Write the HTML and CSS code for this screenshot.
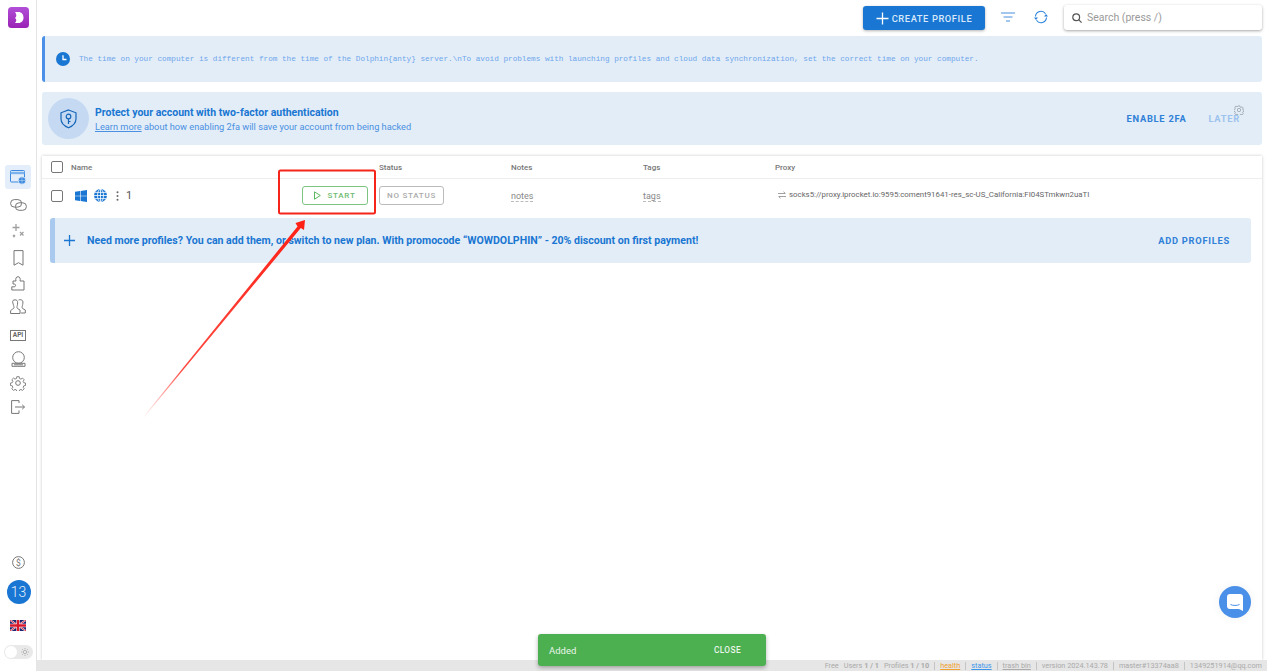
FILE: index.html
```html
<!DOCTYPE html>
<html lang="en">
<head>
<meta charset="utf-8">
<title>Dolphin anty</title>
<link rel="stylesheet" href="styles.css">
</head>
<body>
<div class="app">
  <aside class="sidebar">
    <div class="logo"><svg width="21" height="21" viewBox="0 0 21 21"><defs><linearGradient id="lg" x1="0" y1="0" x2="0" y2="1"><stop offset="0" stop-color="#b14fd8"/><stop offset="1" stop-color="#9a22b4"/></linearGradient></defs><rect width="21" height="21" rx="3.5" fill="url(#lg)"/><path d="M7 5h3.500c3.200 0 5 2.400 5 5.500s-1.800 5.500-5 5.500H7c.8-1.200 1.300-2 1.300-3 0-.9-.6-1.300-1.300-2 .7-.7 1.300-1.200 1.300-2.400C8.300 7.200 7.800 6.200 7 5z" fill="#fff"/></svg></div>
    <nav class="nav">
      <a class="nav-item active"><svg width="16" height="15" viewBox="0 0 16 15" fill="none" stroke="#3b8ae0"><rect x=".5" y=".5" width="14" height="11.500" rx="1"/><path d="M.5 3h14" stroke-width="2.400" stroke="#7db3ec"/><circle cx="12" cy="10.500" r="3.800" fill="#3b8ae0" stroke="#e3eefa" stroke-width=".8"/><path d="M8.500 10.500h7M12 7v7" stroke="#cfe2f7" stroke-width=".5"/></svg></a>
      <a class="nav-item gap4"><svg width="17" height="12" viewBox="0 0 17 12" fill="none" stroke="#777"><rect x=".6" y=".6" width="11" height="7.500" rx="3.700"/><rect x="5.400" y="3.800" width="11" height="7.500" rx="3.700"/></svg></a>
      <a class="nav-item gap2"><svg width="14" height="16" viewBox="0 0 14 16" fill="none" stroke="#a0a0a0" stroke-width="1.300"><path d="M5 1v7M1.500 4.500h7"/><path d="M9 9l3.500 3.500M12.500 9L9 12.500M2 12l2 2M4 12l-2 2"/></svg></a>
      <a class="nav-item gap3"><svg width="11" height="16" viewBox="0 0 11 16" fill="none" stroke="#777"><path d="M1 .6h9v14.600l-4.500-2.500L1 15.200z"/></svg></a>
      <a class="nav-item gap1"><svg width="14" height="15" viewBox="0 0 14 15" fill="none" stroke="#777"><path d="M2 5h3C4.300 3 5 .7 7 .7S9.700 3 9 5h4v9H.8v-3.200h2.600c1.500 0 1.500-2.800 0-2.800H2z"/></svg></a>
      <a class="nav-item"><svg width="16" height="16" viewBox="0 0 16 16" fill="none" stroke="#777"><path d="M3 1.500C4 .6 6 .6 7 1.500c1 1 .6 3.500.3 5-.3 1.400-.7 2.300.2 3L10 11v3.500H.6V12c0-1 1.500-1.500 3-2.500.8-.7.3-1.600 0-3-.3-1.500-1.600-3.800-.6-5z"/><path d="M8.500 1c1.700-.6 3.300-.3 4 .7.900 1.300.2 3.600-.1 5-.3 1.300-.6 2.200.2 2.800l2.700 1.500v3h-4.500"/></svg></a>
      <a class="nav-item gap4"><span class="api">API</span></a>
      <a class="nav-item"><svg width="15" height="16" viewBox="0 0 15 16" fill="none" stroke="#777"><circle cx="7.500" cy="6.500" r="5.800"/><path d="M1 15.300v-3h13v3z"/><path d="M3 13.800h9"/><path d="M5 4.500h.01M8.500 3.500h.01" stroke-width="1.500"/></svg></a>
      <a class="nav-item"><svg width="16" height="16" viewBox="0 0 24 24" fill="none" stroke="#777" stroke-width="1.500"><circle cx="12" cy="12" r="3.500"/><path d="M10 1.500h4l.6 3 2.300 1 2.600-1.700 2.800 2.800-1.700 2.600 1 2.300 3 .6v4l-3 .6-1 2.300 1.700 2.600-2.800 2.800-2.600-1.700-2.300 1-.6 3h-4l-.6-3-2.300-1-2.600 1.700-2.800-2.800 1.700-2.600-1-2.300-3-.6v-4l3-.6 1-2.300L1.700 6.600l2.800-2.800 2.600 1.700 2.300-1z" transform="translate(1.200 1.200) scale(.9)"/></svg></a>
      <a class="nav-item"><svg width="14" height="14" viewBox="0 0 14 14" fill="none" stroke="#777"><path d="M8 3V.6H.6v12.800H8v-3"/><path d="M4 7h9.500M11.200 4.800L13.500 7l-2.300 2.200"/></svg></a>
    </nav>
    <div class="side-bottom">
      <svg width="13" height="13" viewBox="0 0 13 13" fill="none" stroke="#777"><circle cx="6.500" cy="6.500" r="5.900"/><text x="6.500" y="9.500" text-anchor="middle" class="dollar">$</text></svg>
      <div class="avatar">13</div>
      <svg class="flag" width="16" height="11" viewBox="0 0 16 11"><rect width="16" height="11" fill="#1c2470"/><path d="M0 0l16 11M16 0L0 11" stroke="#fff" stroke-width="1.800"/><path d="M0 0l16 11M16 0L0 11" stroke="#d8192c" stroke-width=".9"/><path d="M8 0v11M0 5.500h16" stroke="#fff" stroke-width="3.400"/><path d="M8 0v11M0 5.500h16" stroke="#d8192c" stroke-width="2.400"/></svg>
      <div class="toggle"><span class="knob"></span><svg width="8" height="8" viewBox="0 0 8 8" fill="none" stroke="#aaa" stroke-width=".8"><circle cx="4" cy="4" r="1.700"/><path d="M4 0v1.200M4 6.800V8M0 4h1.200M6.800 4H8M1.200 1.200l.8.800M6 6l.8.800M1.200 6.800L2 6M6 2l.8-.8"/></svg></div>
    </div>
  </aside>

  <div class="main">
    <div class="content">
      <header class="topbar">
        <button class="create"><svg width="13" height="13" viewBox="0 0 13 13" stroke="#fff" stroke-width="1.300"><path d="M6.500 .5v12M.5 6.500h12"/></svg>CREATE PROFILE</button>
        <svg class="tool-filter" width="14" height="10" viewBox="0 0 14 10" stroke="#4a90e2" stroke-width="1.200"><path d="M0 1h14M2.500 5h9M5 9h4"/></svg>
        <svg class="tool-sync" width="14" height="14" viewBox="0 0 14 14" fill="none" stroke="#2a82dc" stroke-width="1.100"><path d="M1.500 6.500A5.500 5.500 0 0 1 11.500 3.700M12.500 7.500A5.500 5.500 0 0 1 2.500 10.300"/><path d="M14 6.500h-4l2-2.600zM0 7.500h4l-2 2.600z" fill="#2a82dc" stroke="none"/></svg>
        <div class="search"><svg width="10" height="10" viewBox="0 0 10 10" fill="none" stroke="#555" stroke-width="1.200"><circle cx="4.200" cy="4.200" r="3.400"/><path d="M6.800 6.800L9.600 9.600"/></svg><span>Search (press /)</span></div>
      </header>

      <div class="alert-time">
        <svg width="14" height="14" viewBox="0 0 14 14"><circle cx="7" cy="7" r="7" fill="#1976d2"/><path d="M7 3.200V7.500h3.500" fill="none" stroke="#fff" stroke-width="1.300"/></svg>
        <span>The time on your computer is different from the time of the Dolphin{anty} server.\nTo avoid problems with launching profiles and cloud data synchronization, set the correct time on your computer.</span>
      </div>

      <div class="alert-2fa">
        <div class="shield"><svg width="17" height="20" viewBox="0 0 17 20" fill="none" stroke="#1565b8" stroke-width="1.200"><path d="M8.500 1l7.500 2.800v6c0 4.200-3.200 7.300-7.500 9-4.300-1.700-7.500-4.800-7.500-9v-6z"/><circle cx="8.500" cy="7.500" r="2.300"/><path d="M8.500 9.800V15M8.500 12.500h2"/></svg></div>
        <div class="tfa-text">
          <div class="tfa-title">Protect your account with two-factor authentication</div>
          <div class="tfa-sub"><u>Learn more</u> about how enabling 2fa will save your account from being hacked</div>
        </div>
        <span class="tfa-enable">ENABLE 2FA</span>
        <span class="tfa-later">LATER<svg class="tfa-gear" width="10" height="10" viewBox="0 0 24 24" fill="none" stroke="#9aa5b1" stroke-width="2"><circle cx="12" cy="12" r="4"/><path d="M10 2h4l.6 3 2.300 1 2.600-1.700 2.800 2.800-1.700 2.600 1 2.300 3 .6v2.800l-3 .6-1 2.300 1.700 2.600-2.800 2.800-2.600-1.700-2.300 1-.6 3h-4l-.6-3-2.300-1-2.600 1.700-2.800-2.800 1.700-2.600-1-2.300-3-.6V10.800l3-.6 1-2.300L1.700 5.300l2.800-2.800 2.600 1.700 2.300-1z"/></svg></span>
      </div>

      <section class="card">
        <div class="tr th">
          <div class="c-name"><span class="check"></span><span class="th-name">Name</span></div>
          <div>Status</div><div>Notes</div><div>Tags</div><div>Proxy</div>
        </div>
        <div class="tr row">
          <div class="c-name">
            <span class="check"></span>
            <svg class="win" width="12" height="12" viewBox="0 0 12 12" fill="#1976d2"><path d="M0 1.700l5-.7v4.700H0zM5.600 .9L12 0v5.700H5.600zM0 6.300h5V11l-5-.7zM5.600 6.300H12V12l-6.400-.9z"/></svg>
            <svg class="globe" width="13" height="13" viewBox="0 0 13 13"><circle cx="6.500" cy="6.500" r="6.500" fill="#1976d2"/><g fill="none" stroke="#fff" stroke-width=".8"><ellipse cx="6.500" cy="6.500" rx="3" ry="6.300"/><path d="M6.500 0v13M0 6.500h13M1 3.400h11M1 9.600h11"/></g></svg>
            <svg class="dots" width="3" height="10" viewBox="0 0 3 10" fill="#666"><circle cx="1.500" cy="1.300" r="1"/><circle cx="1.500" cy="5" r="1"/><circle cx="1.500" cy="8.700" r="1"/></svg>
            <span class="pid">1</span>
            <button class="start"><svg width="7" height="9" viewBox="0 0 7 9" fill="none" stroke="#5cb860"><path d="M.5 .8l5.800 3.700L.5 8.200z"/></svg>START</button>
          </div>
          <div><button class="nostatus">NO STATUS</button></div>
          <div><span class="dash">notes</span></div>
          <div><span class="dash">tags</span></div>
          <div class="proxy"><svg width="8" height="8" viewBox="0 0 8 8" fill="none" stroke="#888" stroke-width=".8"><path d="M0 2.500h7M5.500 .8L7.500 2.500M8 5.500H1M2.500 7.200L.5 5.500"/></svg><span>socks5://proxy.iprocket.io:9595:coment91641-res_sc-US_California:FI04STmkwn2uaTI</span></div>
        </div>
        <div class="banner">
          <svg width="11" height="11" viewBox="0 0 11 11" stroke="#1976d2" stroke-width="1.300"><path d="M5.500 0v11M0 5.500h11"/></svg>
          <span class="banner-text">Need more profiles? You can add them, or switch to new plan. With promocode “WOWDOLPHIN” - 20% discount on first payment!</span>
          <span class="banner-add">ADD PROFILES</span>
        </div>
      </section>
    </div>

    <footer class="footer">
      <span>Free</span><span>Users <b>1 / 1</b></span><span>Profiles <b>1 / 10</b></span><i></i>
      <u class="f-health">health</u><i></i><u class="f-status">status</u><i></i><u>trash bin</u><i></i>
      <span>version 2024.143.78</span><i></i><span>master#13374aa8</span><i></i><span>1349251914@qq.com</span>
    </footer>
  </div>
</div>

<svg class="annotation" width="1267" height="671" viewBox="0 0 1267 671">
  <defs><linearGradient id="ar" gradientUnits="userSpaceOnUse" x1="142" y1="418" x2="305" y2="220"><stop offset="0" stop-color="#ff2a20" stop-opacity="0"/><stop offset=".25" stop-color="#ff2a20" stop-opacity=".85"/><stop offset="1" stop-color="#ff1f14"/></linearGradient></defs>
  <rect x="279" y="170.500" width="96" height="43" rx="1.500" fill="none" stroke="#f5251c" stroke-width="2"/>
  <path d="M142 418.500L297.500 226.500l-2-3.500 9.500-3-1 10-3.200-2L143 418.500z" fill="url(#ar)"/>
</svg>

<div class="toast"><span>Added</span><span class="toast-close">CLOSE</span></div>
<div class="chat"><svg width="16" height="17" viewBox="0 0 16 17"><path d="M3 0h10a3 3 0 0 1 3 3v14l-4-2H3a3 3 0 0 1-3-3V3a3 3 0 0 1 3-3z" fill="#fff"/><path d="M3.500 10.500c2.500 1.300 6.500 1.300 9 0" fill="none" stroke="#4a90e8" stroke-width="1"/></svg></div>
</body>
</html>
```
FILE: styles.css
```css
* { box-sizing: border-box; }
html, body { margin: 0; height: 671px; overflow: hidden; background: #fff; }
body { font-family: Roboto, "Liberation Sans", sans-serif; color: #555; }
u { text-underline-offset: 1px; }
button { font-family: inherit; cursor: pointer; }

.app { display: flex; height: 671px; }

.sidebar { width: 37px; flex: none; border-right: 1px solid #e4e4e4; display: flex; flex-direction: column; align-items: center; }
.logo { width: 21px; height: 21px; margin: 7px 0 0 0; }
.logo svg { display: block; }
.nav { display: flex; flex-direction: column; margin-top: 137px; width: 100%; align-items: center; }
.nav-item { width: 26px; height: 24px; display: flex; align-items: center; justify-content: center; border-radius: 3px; }
.nav-item.active { background: #e3eefa; }
.gap1 { margin-top: 1px; }
.gap2 { margin-top: 2px; }
.gap3 { margin-top: 3px; }
.gap4 { margin-top: 4px; }
.api { border: 1px solid #777; font-size: 6.500px; font-weight: 700; line-height: 9px; padding: 0 1.500px; color: #666; }
.dollar { font: 400 8.500px Roboto, sans-serif; fill: #777; stroke: none; }
.side-bottom { margin-top: auto; display: flex; flex-direction: column; align-items: center; padding-bottom: 12px; }
.avatar { width: 24px; height: 24px; border-radius: 50%; background: #1976d2; color: #e8f2fc; font-size: 14px; font-weight: 300; display: flex; align-items: center; justify-content: center; margin: 11px 0 0 1px; }
.flag { margin-top: 16px; }
.toggle { width: 29px; height: 14px; border-radius: 7px; background: #e9e9e9; margin-top: 14px; display: flex; align-items: center; justify-content: space-between; padding: 0 4px 0 1px; }
.knob { width: 12px; height: 12px; border-radius: 50%; background: #fff; }

.main { flex: 1; min-width: 0; display: flex; flex-direction: column; }
.content { flex: 1; min-height: 0; padding: 0 5px; display: flex; flex-direction: column; }

.topbar { height: 36px; flex: none; display: flex; align-items: flex-start; justify-content: flex-end; }
.create { width: 122px; height: 24px; margin-top: 6px; border: 0; border-radius: 3px; background: #1976d2; color: #d9e9fa; font-size: 9.300px; font-weight: 500; letter-spacing: .6px; display: flex; align-items: center; justify-content: center; gap: 3px; padding: 0; box-shadow: 0 1px 3px rgba(0,0,0,.3); }
.tool-filter { margin: 12px 0 0 16px; }
.tool-sync { margin: 10px 0 0 19px; }
.search { width: 198px; height: 25px; margin: 5px 0 0 16px; border-radius: 3px; background: #fff; box-shadow: 0 1px 3px rgba(0,0,0,.35); display: flex; align-items: center; gap: 5px; padding-left: 8px; font-size: 10.500px; color: #9a9a9a; }

.alert-time { height: 46px; flex: none; background: #e3edf7; border-left: 3px solid #4a90e8; border-radius: 3px; display: flex; align-items: center; gap: 9px; padding-left: 11px; font-family: "Liberation Mono", monospace; font-size: 7.700px; color: #6ea6ec; white-space: nowrap; }

.alert-2fa { height: 53px; flex: none; margin-top: 10px; background: #e3edf7; border-radius: 3px; display: flex; align-items: center; padding-left: 6px; }
.shield { width: 41px; height: 41px; border-radius: 50%; background: #c5daf2; display: flex; align-items: center; justify-content: center; }
.tfa-text { margin-left: 6px; padding-top: 2px; }
.tfa-title { font-size: 10.500px; font-weight: 700; color: #1976d2; line-height: 14px; }
.tfa-sub { font-size: 9.220px; color: #4a90e2; line-height: 14px; }
.tfa-enable { margin-left: auto; font-size: 9.300px; font-weight: 700; letter-spacing: .75px; color: #2f80d8; }
.tfa-later { position: relative; margin: 0 22px 0 22px; font-size: 9.300px; font-weight: 700; letter-spacing: .75px; color: #9cc3ee; }
.tfa-gear { position: absolute; right: -4px; top: -8px; }

.card { flex: 1; min-height: 0; margin-top: 11px; background: #fff; box-shadow: 0 0 3px rgba(0,0,0,.22); }
.tr { display: grid; grid-template-columns: 337px 132px 132px 132px 1fr; padding-left: 0; align-items: center; }
.th { height: 23px; border-bottom: 1px solid #eee; font-size: 8px; font-weight: 500; color: #777; }
.row { height: 33px; font-size: 9px; }
.c-name { display: flex; align-items: center; padding-left: 9px; }
.check { width: 12px; height: 12px; border: 1.300px solid #777; border-radius: 2px; flex: none; }
.th-name { margin-left: 8px; }
.win { margin-left: 12px; }
.globe { margin-left: 7px; }
.dots { margin-left: 9px; }
.pid { margin-left: 7px; font-size: 11px; color: #555; }
.start { margin-left: auto; margin-right: 11px; width: 66px; height: 19px; border: 1px solid #7cc47f; border-radius: 3px; background: #fff; color: #6dbb70; font-size: 8px; font-weight: 500; letter-spacing: .75px; display: flex; align-items: center; justify-content: center; gap: 6px; padding: 0; }
.nostatus { width: 65px; height: 19px; border: 1px solid #bbb; border-radius: 3px; background: #fff; color: #aaa; font-size: 8px; font-weight: 500; letter-spacing: .75px; padding: 0; }
.dash { font-size: 9px; color: #888; border-bottom: 1px dashed #bbb; line-height: 10px; display: inline-block; margin-top: 2px; }
.proxy { display: flex; align-items: center; gap: 3px; padding-left: 3px; font-size: 7.850px; color: #666; white-space: nowrap; margin-top: -2px; }

.banner { height: 45px; margin: 6px 11px 0 8px; background: #e3edf7; border-left: 5px solid #a9c9ee; border-radius: 3px; display: flex; align-items: center; padding-left: 9px; }
.banner-text { margin-left: 12px; font-size: 10.580px; font-weight: 700; color: #1976d2; }
.banner-add { margin-left: auto; margin-right: 21px; font-size: 9.300px; font-weight: 700; letter-spacing: .75px; color: #2f80d8; }

.footer { height: 11px; flex: none; background: #e6e6e6; display: flex; align-items: center; justify-content: flex-end; gap: 5px; padding-right: 5px; font-size: 7.300px; color: #aaa; line-height: 11px; }
.footer b { font-weight: 700; }
.footer i { width: 1px; height: 8px; background: #c4c4c4; }
.f-health { color: #f0a030; }
.f-status { color: #3d96ea; }

.annotation { position: absolute; left: 0; top: 0; pointer-events: none; }
.toast { position: absolute; left: 538px; top: 634px; width: 228px; height: 32px; background: #4caf50; border-radius: 3px; box-shadow: 0 2px 4px rgba(0,0,0,.3); color: #eaf6ea; font-size: 9.500px; display: flex; align-items: center; justify-content: space-between; padding: 0 25px 0 11px; }
.toast-close { font-size: 8.300px; font-weight: 500; letter-spacing: .4px; }
.chat { position: absolute; left: 1219px; top: 586px; width: 32px; height: 32px; border-radius: 50%; background: #4a90e8; box-shadow: 0 0 10px rgba(0,0,0,.06); display: flex; align-items: center; justify-content: center; }
```
